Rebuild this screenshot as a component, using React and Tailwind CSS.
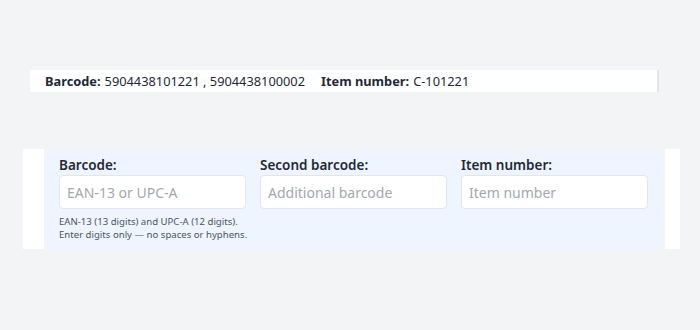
export default function App() {
  const font = { fontFamily: '"Noto Sans", "Open Sans", sans-serif' }

  return (
    <div className="w-[700px] h-[330px] bg-[#f3f4f6] text-[#1f2937]" style={font}>
      <div className="pt-[70px] pl-[30px]">
        <div className="w-[629px] h-[22px] bg-white border-r-2 border-[#e3e4e6] flex items-center pl-[15px] text-[12.8px] leading-none">
          <span className="font-bold mr-1">Barcode:</span>
          <span>5904438101221 , 5904438100002</span>
          <span className="font-bold ml-[16px] mr-1">Item number:</span>
          <span>C-101221</span>
        </div>
      </div>

      <div className="mt-[57px] ml-[23px] flex h-[100px]">
        <div className="w-[21px] bg-white" />
        <div className="w-[619px] bg-[#eef5fe] pl-[15px] pt-[7px] grid grid-cols-[187px_187px_187px] gap-x-[14px] content-start">
          <Field label="Barcode:" placeholder="EAN-13 or UPC-A">
            <p className="mt-[6px] text-[9.6px] leading-[13px] text-[#4b5563] whitespace-nowrap">
              EAN-13 (13 digits) and UPC-A (12 digits).
              <br />
              Enter digits only — no spaces or hyphens.
            </p>
          </Field>
          <Field label="Second barcode:" placeholder="Additional barcode" />
          <Field label="Item number:" placeholder="Item number" />
        </div>
        <div className="w-[2px]" />
        <div className="w-[15px] bg-white" />
      </div>
    </div>
  )
}

function Field({ label, placeholder, children }) {
  return (
    <div className="flex flex-col">
      <label className="text-[13.5px] font-semibold leading-[19px]">{label}</label>
      <input
        className="h-[34px] rounded-[4px] border border-[#e2e6ec] bg-white px-[7px] text-[14px] placeholder:text-[#a3a8b0] outline-none"
        placeholder={placeholder}
      />
      {children}
    </div>
  )
}
